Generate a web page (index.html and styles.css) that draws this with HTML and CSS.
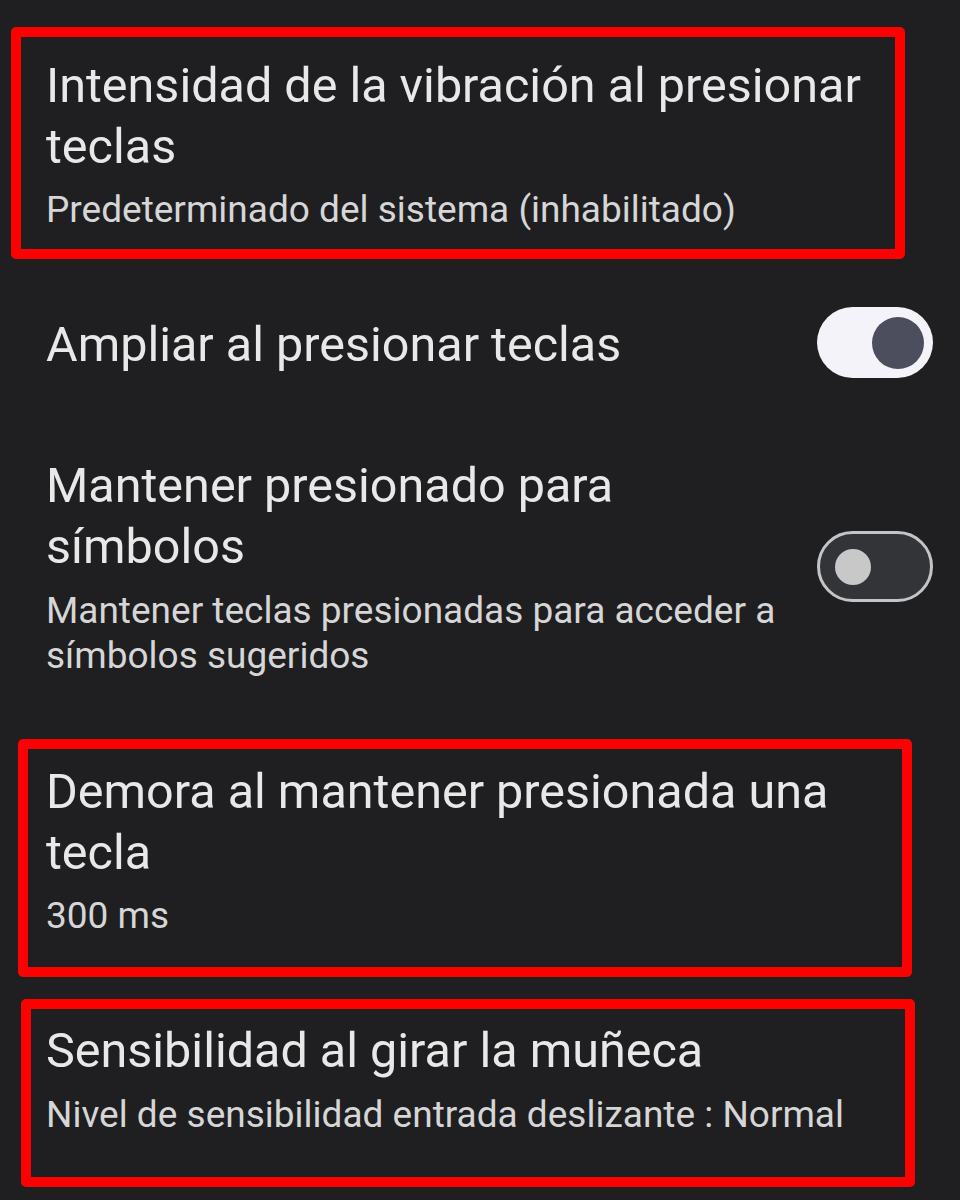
FILE: index.html
```
<!DOCTYPE html>
<html lang="es">
<head>
<meta charset="utf-8">
<title>Ajustes del teclado</title>
<link rel="stylesheet" href="styles.css">
</head>
<body>
<main class="list">
  <section class="item marked mark-1">
    <div class="text">
      <div class="title">Intensidad de la vibración al presionar teclas</div>
      <div class="summary">Predeterminado del sistema (inhabilitado)</div>
    </div>
  </section>

  <section class="item switch-row row-ampliar">
    <div class="text">
      <div class="title">Ampliar al presionar teclas</div>
    </div>
    <div class="toggle on"><span class="knob"></span></div>
  </section>

  <section class="item switch-row row-mantener">
    <div class="text">
      <div class="title">Mantener presionado para símbolos</div>
      <div class="summary">Mantener teclas presionadas para acceder a símbolos sugeridos</div>
    </div>
    <div class="toggle off"><span class="knob"></span></div>
  </section>

  <section class="item marked mark-2">
    <div class="text">
      <div class="title">Demora al mantener presionada una tecla</div>
      <div class="summary">300 ms</div>
    </div>
  </section>

  <section class="item marked mark-3">
    <div class="text">
      <div class="title">Sensibilidad al girar la muñeca</div>
      <div class="summary">Nivel de sensibilidad entrada deslizante : Normal</div>
    </div>
  </section>
</main>
</body>
</html>
```
FILE: styles.css
```
html, body {
  margin: 0;
  padding: 0;
  background: #1f1f21;
}

body {
  width: 960px;
  height: 1200px;
  overflow: hidden;
  font-family: Roboto, "Noto Sans", sans-serif;
  color: #e6e6e6;
}

.list {
  display: flex;
  flex-direction: column;
}

.title {
  font-size: 48.5px;
  line-height: 61px;
  color: #e8e8e8;
}

.summary {
  font-size: 37px;
  line-height: 45px;
  color: #d6d6d6;
  margin-top: 10px;
}

/* red annotation frames */
.marked {
  border: 10px solid #ff0000;
  border-radius: 5px;
  box-sizing: border-box;
}

.mark-1 {
  margin: 27px 0 0 11px;
  width: 894px;
  padding: 18px 20px 17px 25px;
}

.mark-2 {
  margin: 61px 0 0 18px;
  width: 894px;
  padding: 12px 0 29px 18px;
}

.mark-3 {
  margin: 22px 0 0 21px;
  width: 894px;
  padding: 11px 0 40px 15px;
}

.mark-3 .summary {
  margin-top: 11px;
}

/* switch rows */
.switch-row {
  display: flex;
  align-items: center;
  gap: 16px;
  padding: 0 27px 0 46px;
}

.switch-row .text {
  flex: 1;
  min-width: 0;
}

.row-ampliar {
  margin-top: 48px;
}

.row-ampliar .text {
  position: relative;
  top: 2px;
}

.row-mantener {
  margin-top: 77px;
}

.row-mantener .summary {
  margin-top: 11px;
}

.toggle {
  flex: none;
  width: 116px;
  height: 71px;
  border-radius: 36px;
  box-sizing: border-box;
  display: flex;
  align-items: center;
}

.toggle.on {
  background: #f3f3f9;
  justify-content: flex-end;
  padding-right: 9px;
}

.toggle.on .knob {
  width: 52px;
  height: 52px;
  border-radius: 50%;
  background: #4c4e5e;
}

.toggle.off {
  background: #333437;
  border: 3px solid #c4c4c6;
  justify-content: flex-start;
  padding-left: 15px;
}

.toggle.off .knob {
  width: 36px;
  height: 36px;
  border-radius: 50%;
  background: #c8c8c8;
}
```
